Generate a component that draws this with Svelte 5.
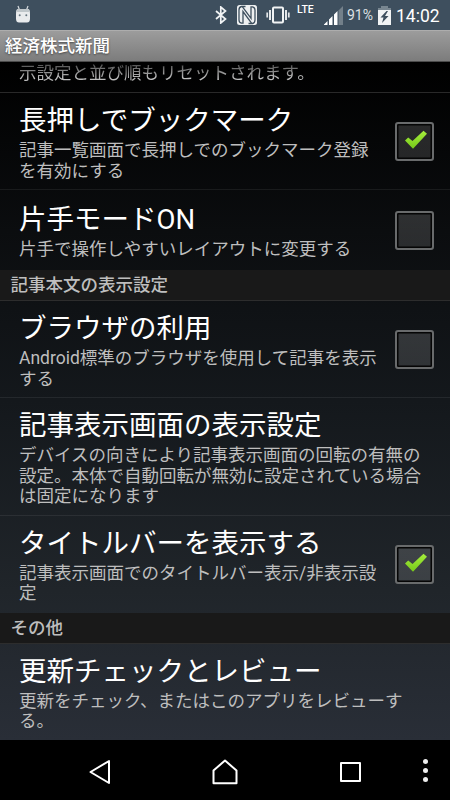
<script>
	let rows = $state([
		{ type: "row", title: "長押しでブックマーク", lines: ["記事一覧画面で長押しでのブックマーク登録", "を有効にする"], checked: true },
		{ type: "row", title: "片手モードON", lines: ["片手で操作しやすいレイアウトに変更する"], checked: false, last: true },
		{ type: "header", title: "記事本文の表示設定" },
		{ type: "row", title: "ブラウザの利用", lines: ["Android標準のブラウザを使用して記事を表示", "する"], checked: false },
		{ type: "row", title: "記事表示画面の表示設定", lines: ["デバイスの向きにより記事表示画面の回転の有無の", "設定。本体で自動回転が無効に設定されている場合", "は固定になります"] },
		{ type: "row", title: "タイトルバーを表示する", lines: ["記事表示画面でのタイトルバー表示/非表示設", "定"], checked: true, last: true },
		{ type: "header", title: "その他" },
		{ type: "row", title: "更新チェックとレビュー", lines: ["更新をチェック、またはこのアプリをレビューす", "る。"], last: true }
	])

	function toggle( row ) {
		row.checked = !row.checked
	}
</script>

<div class="screen">
	<div class="status">
		<svg class="robot" width="16" height="18" viewBox="0 0 16 18">
			<path d="M3 1l1.500 4M13 1l-1.500 4" stroke="#d5dadd" stroke-width="1.2" />
			<path d="M3 4h10q1.500 0 1.800 2l.2 3v5q-.2 3.500-3 3.500H4q-2.800 0-3-3.500V9l.2-3Q1.500 4 3 4z" fill="#e9ebed" />
			<path d="M2.500 4h11l1.200 3H1.300z" fill="#bfc6ca" />
			<circle cx="4.700" cy="10.300" r="1" fill="#64737e" />
			<circle cx="11.300" cy="10.300" r="1" fill="#64737e" />
		</svg>
		<div class="status__icons">
			<svg class="bluetooth" width="12" height="18" viewBox="0 0 12 18">
				<path d="M1 5l9.500 8-4.700 4V1l4.700 4L1 13" fill="none" stroke="#f1f3f4" stroke-width="1.700" />
			</svg>
			<svg class="nfc" width="20" height="20" viewBox="0 0 20 20">
				<rect width="20" height="20" rx="2.500" fill="#eef0f1" />
				<path d="M8.500 1.500H4.500Q2 2 2 5v10q0 2.500 2.500 3.200H6V6.500l8.500 11.700" fill="none" stroke="#3e4f5e" stroke-width="1.300" />
				<path d="M11.500 18.500h4q2.500-.5 2.500-3.500V5q0-2.500-2.500-3.200H14v11.500L5.500 1.800" fill="none" stroke="#3e4f5e" stroke-width="1.300" />
			</svg>
			<svg class="vibrate" width="24" height="18" viewBox="0 0 24 18">
				<rect x="7" y="1.500" width="10" height="15" rx="1" fill="none" stroke="#f1f3f4" stroke-width="2" />
				<path d="M4 4v10M20 4v10" stroke="#e4e7e9" stroke-width="2" />
				<path d="M1.200 6.500v5M22.800 6.500v5" stroke="#e4e7e9" stroke-width="1.700" />
			</svg>
			<span class="lte">LTE</span>
			<svg class="signal" width="19" height="19" viewBox="0 0 19 19">
				<path d="M14.500 4.500L19 0v19h-4.500z" fill="#73808a" />
				<path d="M0 19v-.5L3.500 15v4zM5 19v-5.500L8.500 10v9zM10 19V8.500L13.500 5v14z" fill="#fff" />
			</svg>
			<span class="percent">91%</span>
			<svg class="battery" width="13" height="19" viewBox="0 0 13 19">
				<path d="M3 0h7v2h3v3H0V2h3z" fill="#788690" />
				<path d="M0 4h13v15H0z" fill="#f1f3f4" />
				<path d="M8.500 5L2.500 11.500h3L4 17l6.500-7H7L10 5z" fill="#3e4f5e" />
			</svg>
			<span class="clock">14:02</span>
		</div>
	</div>

	<div class="titlebar">経済株式新聞</div>

	<div class="list">
		<div class="cutoff"><span>示設定と並び順もリセットされます。</span></div>
		{#each rows as row}
			{#if row.type === "header"}
				<div class="header">{row.title}</div>
			{:else}
				<div class="row" class:row--last={row.last}>
					<div class="row__text">
						<div class="row__title">{row.title}</div>
						{#each row.lines as line}
							<div class="row__line">{line}</div>
						{/each}
					</div>
					{#if row.checked !== undefined}
						<button class="checkbox" aria-label={row.title} onclick={() => toggle( row )}>
							{#if row.checked}
								<svg width="24" height="20" viewBox="0 0 24 20">
									<defs>
										<linearGradient id="tick" x1="0" y1="0" x2="0" y2="1">
											<stop offset="0" stop-color="#a6ee3c" />
											<stop offset="1" stop-color="#76c91a" />
										</linearGradient>
									</defs>
									<path d="M1 10.500L4.200 7.600 8.500 11 19.500 0.700 23 3.700 9 18.700z" fill="url(#tick)" />
								</svg>
							{/if}
						</button>
					{/if}
				</div>
			{/if}
		{/each}
	</div>

	<div class="nav">
		<svg class="nav__back" width="24" height="26" viewBox="0 0 24 26">
			<path d="M21 2v22L2.500 13z" fill="none" stroke="#fff" stroke-width="2" stroke-linejoin="round" />
		</svg>
		<svg class="nav__home" width="26" height="26" viewBox="0 0 26 26">
			<path d="M1.500 11.500L13 1.500l11.500 10v12.700h-23z" fill="none" stroke="#fff" stroke-width="2" stroke-linejoin="round" />
		</svg>
		<div class="nav__recent"></div>
		<div class="nav__more"><i></i><i></i><i></i></div>
	</div>
</div>

<style>
	:global(body) {
		margin: 0;
		background: #000;
	}

	.screen {
		display: flex;
		flex-direction: column;
		width: 450px;
		height: 800px;
		overflow: hidden;
		color: #fff;
		font-family: Roboto, "Noto Sans CJK JP", sans-serif;
		font-size: 17.5px;
		white-space: nowrap;
		text-spacing-trim: space-all;
	}

	.status {
		display: flex;
		justify-content: space-between;
		box-sizing: border-box;
		height: 30px;
		padding: 5px 10px 0 15px;
		background: #3e4f5e;
	}

	.status__icons {
		display: flex;
		align-items: flex-start;
	}

	.bluetooth {
		margin: 1px 10px 0 0;
	}

	.nfc {
		margin-right: 9px;
	}

	.vibrate {
		margin: 1px 7px 0 0;
	}

	.lte {
		width: 18px;
		margin-right: 9px;
		font-size: 10.5px;
		font-weight: 500;
		line-height: 10px;
	}

	.signal {
		margin: 1px 4px 0 0;
	}

	.percent {
		width: 27px;
		margin-right: 4px;
		color: #dde1e4;
		font-size: 14px;
		line-height: 21px;
	}

	.battery {
		margin: 1px 5px 0 0;
	}

	.clock {
		width: 44px;
		font-size: 17.5px;
		line-height: 22px;
	}

	.titlebar {
		box-sizing: border-box;
		height: 32px;
		padding-left: 5px;
		border-top: 1px solid #adadad;
		border-bottom: 1px solid #4b4b4b;
		background: linear-gradient(#9c9c9c, #7c7c7c);
		font-weight: 500;
		line-height: 30px;
		text-shadow: 0 1px 2px #444;
	}

	.list {
		height: 678px;
		overflow: hidden;
		background: linear-gradient(#000, #0b0d0f 25%, #14181c 50%, #20252a 78%, #292e37);
	}

	.cutoff {
		box-sizing: border-box;
		height: 31px;
		padding-left: 19px;
		border-bottom: 1px solid #292929;
		line-height: 23px;
	}

	.cutoff span {
		background: linear-gradient(#444, #bebebe 75%);
		background-clip: text;
		color: transparent;
	}

	.row {
		display: flex;
		align-items: center;
		justify-content: space-between;
		box-sizing: border-box;
		min-height: 80px;
		padding: 9px 16px 8px 19px;
		border-bottom: 1px solid #ffffff12;
	}

	.row--last {
		border-color: transparent;
	}

	.row__title {
		font-size: 27.5px;
		line-height: 38px;
	}

	.row__line {
		color: #bebebe;
		line-height: 20.5px;
	}

	.header {
		box-sizing: border-box;
		height: 31px;
		padding-left: 10.5px;
		border-bottom: 1px solid #2d2d2d;
		background: #191919;
		color: #bebebe;
		font-weight: 500;
		line-height: 31px;
	}

	.checkbox {
		display: flex;
		align-items: center;
		justify-content: center;
		box-sizing: border-box;
		width: 39px;
		height: 39px;
		padding: 0 0 3px 2px;
		border: 2px solid #696b6c;
		border-radius: 3px;
		background: linear-gradient(#ffffff26, #ffffff20);
		box-shadow: inset 0 0 0 1.5px #050505;
	}

	.nav {
		display: flex;
		align-items: center;
		box-sizing: border-box;
		height: 60px;
		padding: 4px 22px 0 88px;
		background: #000;
	}

	.nav__back {
		margin-right: 100px;
	}

	.nav__home {
		margin-right: 102px;
	}

	.nav__recent {
		box-sizing: border-box;
		width: 21px;
		height: 20px;
		border: 2px solid #fff;
		border-radius: 1px;
	}

	.nav__more {
		display: flex;
		flex-direction: column;
		gap: 4px;
		margin: 0 0 4px auto;
	}

	.nav__more i {
		width: 5px;
		height: 5px;
		border-radius: 50%;
		background: #eee;
	}
</style>
